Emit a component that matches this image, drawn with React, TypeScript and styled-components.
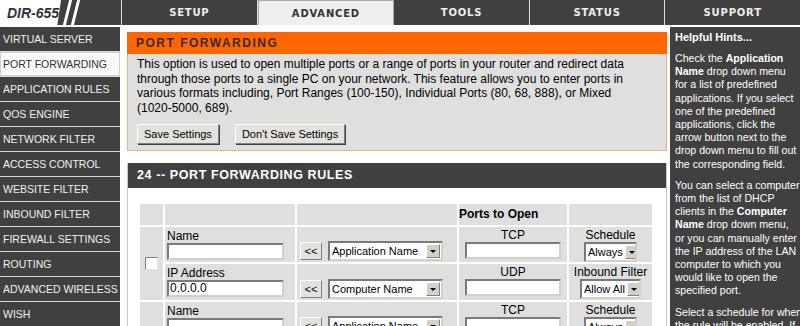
import React from "react";
import styled, { createGlobalStyle } from "styled-components";

const GlobalStyle = createGlobalStyle`
  html, body {
    margin: 0;
    padding: 0;
    background: #ffffff;
    overflow: hidden;
  }
  body {
    font-family: "Liberation Sans", Arial, sans-serif;
    font-size: 11px;
    color: #000;
  }
`;

const tabs = ["SETUP", "ADVANCED", "TOOLS", "STATUS", "SUPPORT"];

const menu = [
  "VIRTUAL SERVER",
  "PORT FORWARDING",
  "APPLICATION RULES",
  "QOS ENGINE",
  "NETWORK FILTER",
  "ACCESS CONTROL",
  "WEBSITE FILTER",
  "INBOUND FILTER",
  "FIREWALL SETTINGS",
  "ROUTING",
  "ADVANCED WIRELESS",
  "WISH",
];

const introLines = [
  "This option is used to open multiple ports or a range of ports in your router and redirect data",
  "through those ports to a single PC on your network. This feature allows you to enter ports in",
  "various formats including, Port Ranges (100-150), Individual Ports (80, 68, 888), or Mixed",
  "(1020-5000, 689).",
];

// one rule = two table rows (name/app/tcp/schedule + ip/computer/udp/filter)
const RuleRows: React.FC = () => (
  <>
    <RuleRow h={35}>
      <CheckCell rowSpan={2}>
        <CheckBox />
      </CheckCell>
      <FieldCell>
        <Label>Name</Label>
        <TextInput w={117} />
      </FieldCell>
      <PickCell>
        <Picker>
          <SmallButton>&lt;&lt;</SmallButton>
          <Select w={115}>
            <span>Application Name</span>
            <Arrow />
          </Select>
        </Picker>
      </PickCell>
      <CenterCell>
        <Label>TCP</Label>
        <TextInput w={96} />
      </CenterCell>
      <CenterCell>
        <Label>Schedule</Label>
        <Select w={53}>
          <span>Always</span>
          <Arrow />
        </Select>
      </CenterCell>
    </RuleRow>
    <RuleRow h={36}>
      <FieldCell>
        <Label>IP Address</Label>
        <TextInput w={117}>0.0.0.0</TextInput>
      </FieldCell>
      <PickCell>
        <Picker>
          <SmallButton>&lt;&lt;</SmallButton>
          <Select w={115}>
            <span>Computer Name</span>
            <Arrow />
          </Select>
        </Picker>
      </PickCell>
      <CenterCell>
        <Label>UDP</Label>
        <TextInput w={96} />
      </CenterCell>
      <CenterCell>
        <Label>Inbound Filter</Label>
        <Select w={61}>
          <span>Allow All</span>
          <Arrow />
        </Select>
      </CenterCell>
    </RuleRow>
  </>
);

const App: React.FC = () => {
  return (
    <>
      <GlobalStyle />
      <Page>
        <TopBar>
          <LogoCell>
            <LogoLabel>DIR-655</LogoLabel>
            <Slash />
            <Slash />
          </LogoCell>
          {tabs.map((t) => (
            <Tab key={t} active={t === "ADVANCED"}>
              {t}
            </Tab>
          ))}
        </TopBar>

        <Body>
          <Sidebar>
            {menu.map((m) => (
              <MenuItem key={m} active={m === "PORT FORWARDING"}>
                {m}
              </MenuItem>
            ))}
          </Sidebar>

          <Main>
            <OrangeBox>
              <OrangeHeader>PORT FORWARDING</OrangeHeader>
              <OrangeBody>
                <Intro>
                  {introLines.map((l) => (
                    <Line key={l}>{l}</Line>
                  ))}
                </Intro>
                <ButtonRow>
                  <Button>Save Settings</Button>
                  <Button>Don't Save Settings</Button>
                </ButtonRow>
              </OrangeBody>
            </OrangeBox>

            <RulesBox>
              <RulesHeader>24 -- PORT FORWARDING RULES</RulesHeader>
              <RulesBody>
                <RulesTable>
                  <colgroup>
                    <col style={{ width: 23 }} />
                    <col style={{ width: 130 }} />
                    <col style={{ width: 160 }} />
                    <col style={{ width: 108 }} />
                    <col style={{ width: 83 }} />
                  </colgroup>
                  <tbody>
                    <HeadRow>
                      <td />
                      <td />
                      <td />
                      <HeadCell>Ports to Open</HeadCell>
                      <td />
                    </HeadRow>
                    <RuleRows />
                    <RuleRows />
                  </tbody>
                </RulesTable>
              </RulesBody>
            </RulesBox>
          </Main>

          <Hints>
            <HintTitle>Helpful Hints...</HintTitle>
            <HintPara>
              <Line>
                Check the <b>Application</b>
              </Line>
              <Line>
                <b>Name</b> drop down menu
              </Line>
              <Line>for a list of predefined</Line>
              <Line>applications. If you select</Line>
              <Line>one of the predefined</Line>
              <Line>applications, click the</Line>
              <Line>arrow button next to the</Line>
              <Line>drop down menu to fill out</Line>
              <Line>the corresponding field.</Line>
            </HintPara>
            <HintPara>
              <Line>You can select a computer</Line>
              <Line>from the list of DHCP</Line>
              <Line>
                clients in the <b>Computer</b>
              </Line>
              <Line>
                <b>Name</b> drop down menu,
              </Line>
              <Line>or you can manually enter</Line>
              <Line>the IP address of the LAN</Line>
              <Line>computer to which you</Line>
              <Line>would like to open the</Line>
              <Line>specified port.</Line>
            </HintPara>
            <HintPara>
              <Line>Select a schedule for when</Line>
              <Line>the rule will be enabled. If</Line>
            </HintPara>
          </Hints>
        </Body>
      </Page>
    </>
  );
};

export default App;

// layout
const Page = styled.div`
  width: 800px;
  height: 326px;
  overflow: hidden;
  display: flex;
  flex-direction: column;
`;

const TopBar = styled.div`
  height: 25px;
  flex-shrink: 0;
  display: flex;
  background: #404040;
  border-bottom: 2px solid #ffffff;
`;

const LogoCell = styled.div`
  width: 121px;
  flex-shrink: 0;
  display: flex;
  align-items: stretch;
  background: #404040;
  border-right: 1px solid #dcdcdc;
  overflow: hidden;
`;

const LogoLabel = styled.div`
  width: 54px;
  flex-shrink: 0;
  padding-left: 7px;
  background: #ffffff;
  clip-path: polygon(0 0, 100% 0, 94% 100%, 0 100%);
  display: flex;
  align-items: center;
  white-space: nowrap;
  font-family: "Liberation Sans", Arial, sans-serif;
  font-style: italic;
  font-weight: bold;
  font-size: 14px;
  color: #333;
`;

const Slash = styled.div`
  width: 3px;
  flex-shrink: 0;
  margin-left: 5px;
  background: #ffffff;
  transform: skewX(-14deg);
`;

const Tab = styled.div<{ active?: boolean }>`
  flex: 1;
  display: flex;
  align-items: center;
  justify-content: center;
  font-family: "DejaVu Sans", Verdana, sans-serif;
  font-weight: bold;
  font-size: 10px;
  letter-spacing: 0.8px;
  color: ${({ active }) => (active ? "#333" : "#eeeeee")};
  background: ${({ active }) => (active ? "#efefef" : "#404040")};
  border-right: 1px solid #dcdcdc;
  box-sizing: border-box;
  ${({ active }) => (active ? "border: 1px solid #aaa; border-bottom: none;" : "")}

  &:last-child {
    border-right: none;
  }
`;

const Body = styled.div`
  flex: 1;
  display: grid;
  grid-template-columns: 121px 549px 130px;
  min-height: 0;
`;

const Sidebar = styled.div`
  display: flex;
  flex-direction: column;
  padding-right: 1px;
`;

const MenuItem = styled.div<{ active?: boolean }>`
  height: 24px;
  flex-shrink: 0;
  display: flex;
  align-items: center;
  padding-left: 3px;
  font-size: 10.5px;
  color: ${({ active }) => (active ? "#333" : "#f0f0f0")};
  background: ${({ active }) => (active ? "#f8f8f8" : "#404040")};
  border-bottom: 1px solid #d8d8d8;
  ${({ active }) => (active ? "box-shadow: inset 0 0 0 1px #cfcfcf;" : "")}
`;

const Main = styled.div`
  padding: 5px 3px 0 6px;
  display: flex;
  flex-direction: column;
  gap: 12px;
  min-height: 0;
`;

const OrangeBox = styled.div`
  display: flex;
  flex-direction: column;
`;

const OrangeHeader = styled.div`
  height: 22px;
  display: flex;
  align-items: center;
  padding-left: 9px;
  background: #ff6600;
  color: #3a2a20;
  font-weight: bold;
  font-size: 12px;
  letter-spacing: 1.5px;
`;

const OrangeBody = styled.div`
  background: #dfdfdf;
  border: 1px solid #f0b080;
  border-top: none;
  padding: 3px 9px 6px;
`;

const Intro = styled.div`
  font-size: 12px;
  line-height: 14.7px;
`;

const Line = styled.span`
  display: block;
  white-space: nowrap;
`;

const ButtonRow = styled.div`
  display: flex;
  gap: 16px;
  margin-top: 8px;
`;

const Button = styled.div`
  height: 20px;
  box-sizing: border-box;
  padding: 0 6px;
  display: flex;
  align-items: center;
  font-size: 11px;
  background: #e4e2dc;
  border: 1px solid;
  border-color: #ffffff #808080 #808080 #ffffff;
  box-shadow: 1px 1px 0 #404040;
`;

const RulesBox = styled.div`
  border: 1px solid #c8c8c8;
  border-top: none;
  flex: 1;
`;

const RulesHeader = styled.div`
  height: 25px;
  display: flex;
  align-items: center;
  padding-left: 9px;
  background: #404040;
  color: #ffffff;
  font-weight: bold;
  font-size: 12.5px;
  letter-spacing: 0.6px;
`;

const RulesBody = styled.div`
  padding: 14px 0 0 10px;
`;

const RulesTable = styled.table`
  border-collapse: separate;
  border-spacing: 2px;
  table-layout: fixed;
  width: 516px;

  td {
    background: #dfdfdf;
    padding: 0;
  }
`;

const HeadRow = styled.tr`
  height: 21px;
`;

const HeadCell = styled.td`
  font-weight: bold;
  font-size: 12px;
  vertical-align: middle;
`;

const RuleRow = styled.tr<{ h: number }>`
  height: ${({ h }) => h}px;
`;

const CheckCell = styled.td`
  text-align: center;
  vertical-align: middle;
`;

const CheckBox = styled.div`
  width: 11px;
  height: 11px;
  margin: 0 auto;
  background: #ffffff;
  border: 1px solid;
  border-color: #808080 #e0e0e0 #e0e0e0 #808080;
`;

const FieldCell = styled.td`
  vertical-align: top;
  padding: 3px 0 0 2px !important;
`;

const Label = styled.div`
  font-size: 12px;
  line-height: 13px;
`;

const TextInput = styled.div<{ w: number }>`
  width: ${({ w }) => w}px;
  height: 17px;
  box-sizing: border-box;
  background: #ffffff;
  border: 2px solid;
  border-color: #7a7a7a #d4d0c8 #d4d0c8 #7a7a7a;
  font-size: 12px;
  line-height: 13px;
  padding-left: 1px;
  display: inline-block;
  text-align: left;
  vertical-align: top;
`;

const PickCell = styled.td`
  vertical-align: bottom;
  padding: 0 0 0 3px !important;
`;

const Picker = styled.div`
  display: flex;
  align-items: center;
  gap: 6px;
  padding-bottom: 1px;
`;

const SmallButton = styled.div`
  width: 22px;
  height: 18px;
  box-sizing: border-box;
  display: flex;
  align-items: center;
  justify-content: center;
  font-size: 11px;
  background: #e4e2dc;
  border: 1px solid;
  border-color: #ffffff #808080 #808080 #ffffff;
`;

const Select = styled.div<{ w: number }>`
  width: ${({ w }) => w}px;
  height: 20px;
  box-sizing: border-box;
  display: inline-flex;
  align-items: center;
  justify-content: space-between;
  gap: 2px;
  background: #ffffff;
  border: 2px solid;
  border-color: #7a7a7a #d4d0c8 #d4d0c8 #7a7a7a;
  font-size: 11px;
  padding-left: 2px;
  text-align: left;
  white-space: nowrap;
  overflow: hidden;
`;

const Arrow = styled.span`
  width: 14px;
  height: 14px;
  margin-right: 1px;
  flex-shrink: 0;
  box-sizing: border-box;
  background: #d4d0c8;
  border: 1px solid;
  border-color: #ffffff #808080 #808080 #ffffff;
  position: relative;

  &::after {
    content: "";
    position: absolute;
    left: 3px;
    top: 5px;
    border-left: 3px solid transparent;
    border-right: 3px solid transparent;
    border-top: 3px solid #000;
  }
`;

const CenterCell = styled.td`
  text-align: center;
  vertical-align: top;
  padding-top: 2px !important;
`;

const Hints = styled.div`
  background: #404040;
  color: #ffffff;
  padding: 4px 0 0 5px;
  font-size: 10.6px;
  line-height: 13.2px;
  overflow: hidden;
`;

const HintTitle = styled.div`
  font-weight: bold;
  font-size: 11px;
  line-height: 13px;
`;

const HintPara = styled.div`
  margin-top: 8px;
`;
